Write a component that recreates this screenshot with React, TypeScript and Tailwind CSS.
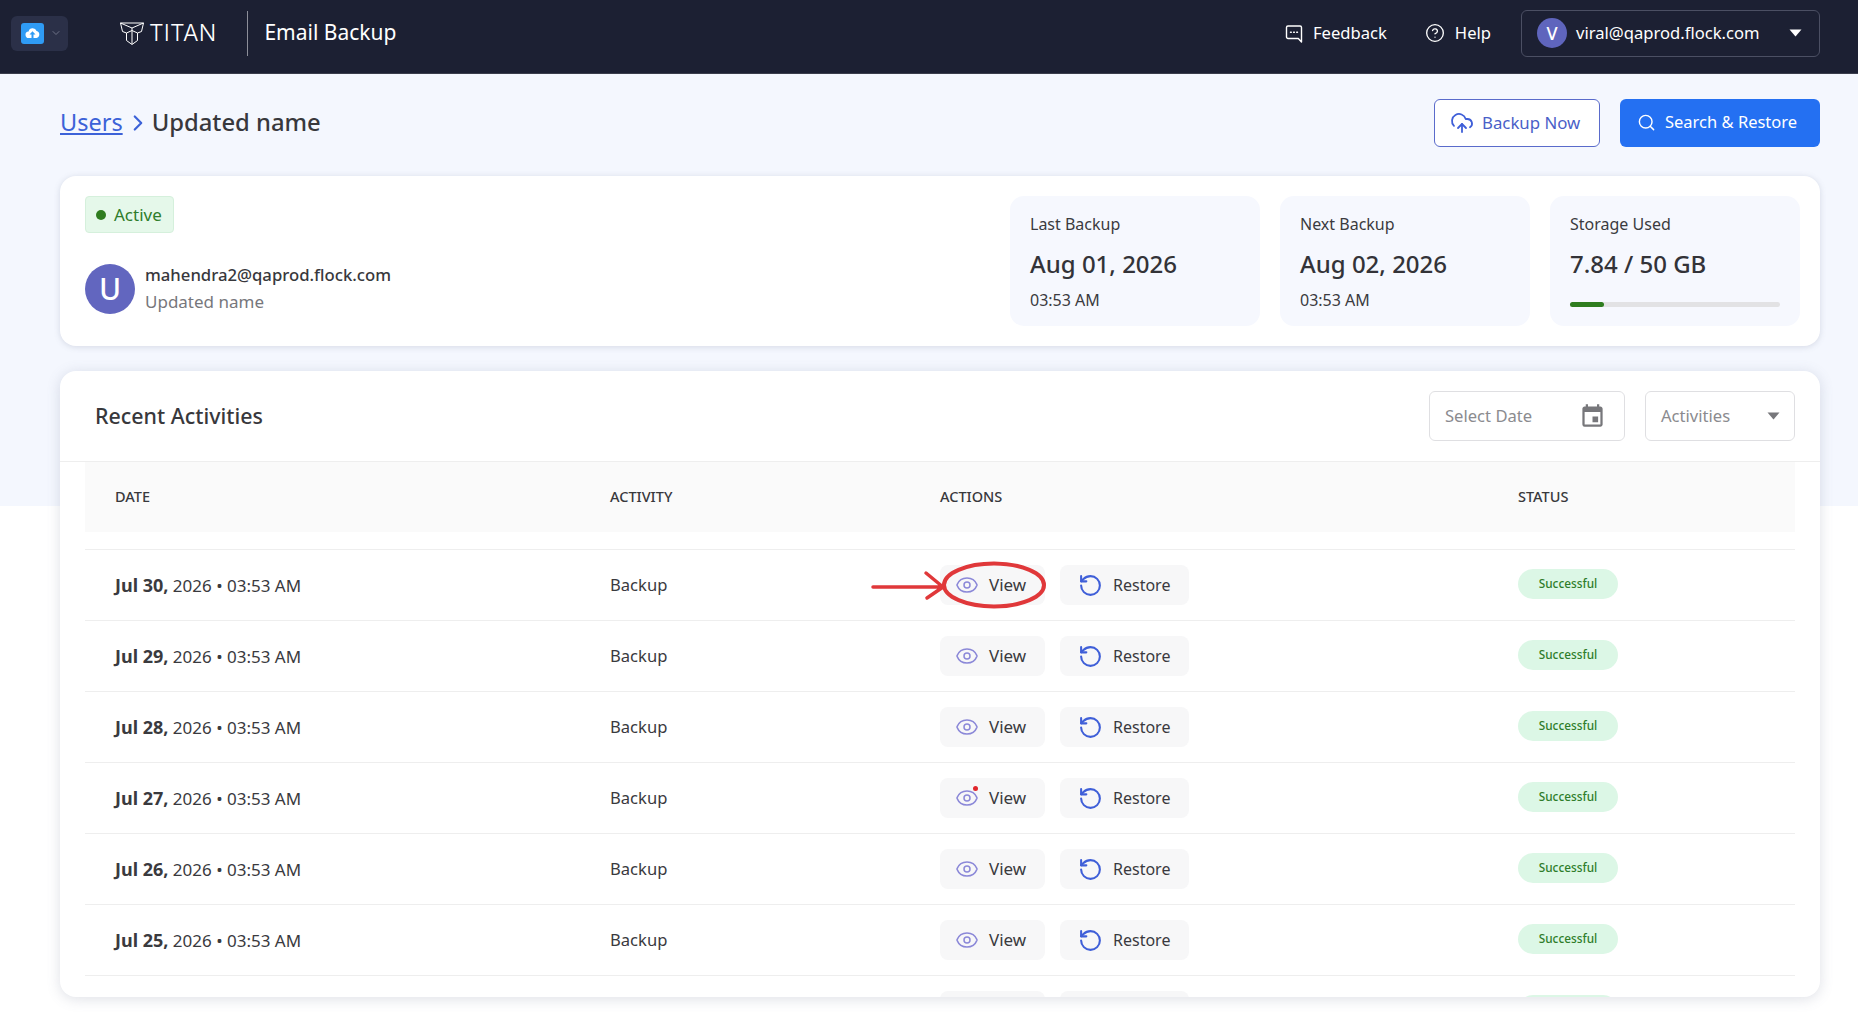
import { ChevronDown, ChevronRight, CircleHelp, CloudUpload, Eye, RotateCcw, Search } from "lucide-react";
import { MdEvent } from "react-icons/md";

const rows = ["Jul 30", "Jul 29", "Jul 28", "Jul 27", "Jul 26", "Jul 25"];

const Caret = ({ className }: { className: string }) => (
  <svg width="13" height="8" viewBox="0 0 13 8" className={className}>
    <path d="M0.5 0.5h12L6.5 7.5z" fill="currentColor" />
  </svg>
);

const TitanLogo = () => (
  <svg width="24" height="23" viewBox="0 0 24 23" fill="none" stroke="#fff" strokeWidth="1" strokeLinejoin="round">
    <path d="M0.5 1h23l-2 8.5-4 1.5v7.5l-5.5 4-5.5-4V11l-4-1.5z" />
    <path d="M0.5 1l11.5 5 11.5-5M12 6v16M6.5 11l5.5-2.5 5.5 2.5" />
  </svg>
);

const FeedbackIcon = () => (
  <svg width="18" height="19" viewBox="0 0 18 19" fill="none" stroke="#fff" strokeWidth="1.4" strokeLinejoin="round">
    <path d="M3 2h12a1.5 1.5 0 0 1 1.5 1.5V18l-3.2-3.5H3A1.5 1.5 0 0 1 1.5 13V3.5A1.5 1.5 0 0 1 3 2z" />
    <path d="M5.5 8.2h.8M8.6 8.2h.8M11.7 8.2h.8" strokeLinecap="round" />
  </svg>
);

const Stat = ({ label, value, sub }: { label: string; value: string; sub: string }) => (
  <div className="w-[250px] h-[130px] rounded-[14px] bg-[#f6f8fe] px-5 pt-[16px]">
    <p className="text-base leading-[24px] text-[#3b3b3f]">{label}</p>
    <p className="mt-[11px] text-[24px] leading-[34px] font-medium text-[#333338]">{value}</p>
    <p className="mt-[7px] text-base leading-[24px] text-[#3b3b3f]">{sub}</p>
  </div>
);

const Actions = ({ index }: { index: number }) => (
  <div className="w-[578px] flex gap-[15px]">
    <div className="w-[105px] h-[40px] rounded-lg bg-[#f7f7f8] flex items-center pl-[15px] gap-[10px] text-[17px] relative">
      <Eye size={24} strokeWidth={1.5} className="text-[#8b88d8]" />
      {index === 3 && <span className="absolute left-[33px] top-[8px] w-[5px] h-[5px] rounded-full bg-[#e0262c]" />}
      <span>View</span>
    </div>
    <div className="w-[129px] h-[40px] rounded-lg bg-[#f7f7f8] flex items-center pl-[18px] gap-[10px] text-[16px]">
      <RotateCcw size={25} strokeWidth={2} className="text-[#3f5fd8]" />
      <span>Restore</span>
    </div>
  </div>
);

const Row = ({ date, index }: { date: string; index: number }) => (
  <div className="flex items-center h-[71px] shrink-0 border-t border-[#eeeeee] text-[#3a3a3e]">
    <div className="w-[495px] pl-[30px] text-[17px] mr-[30px]">
      <span className="font-bold text-[18px]">{date},</span> 2026 • 03:53 AM
    </div>
    <div className="w-[330px] text-[16.6px]">Backup</div>
    <Actions index={index} />
    <div className="w-[100px] h-[30px] mb-[2px] rounded-[15px] bg-[#dcf7e6] flex items-center justify-center text-[11.8px] font-medium text-[#2f7d2b]">
      Successful
    </div>
  </div>
);

export default function App() {
  return (
    <div className="h-screen overflow-hidden flex flex-col bg-white font-['Noto_Sans','Open_Sans',sans-serif]">
      <header className="h-[74px] shrink-0 bg-[#1c2033] border-b border-[#3a3d4c] flex items-center pl-[11px] pr-[38px] pb-[7px]">
        <div className="w-[57px] h-[35px] rounded-md bg-[#2b3048] flex items-center pl-[10px] gap-[6px]">
          <div className="w-[23px] h-[21px] rounded-[3px] bg-[#2f9bf4] flex items-center justify-center">
            <svg width="15" height="12" viewBox="0 0 15 12">
              <path d="M4 11a3.3 3.3 0 0 1-.4-6.6A4.2 4.2 0 0 1 11.6 4 3.6 3.6 0 0 1 11.5 11H8.5V7.5h2L7.5 4.2 4.5 7.5h2V11z" fill="#fff" />
            </svg>
          </div>
          <ChevronDown size={12} className="text-[#6d7186]" />
        </div>
        <div className="ml-[52px] flex items-center gap-[5px]">
          <TitanLogo />
          <span className="font-['Inter'] font-light text-[23px] leading-none text-white tracking-[0.01em]">TITAN</span>
        </div>
        <div className="ml-[31px] w-px h-[45px] bg-[#8c8e99]" />
        <span className="ml-[16px] text-[21px] text-white">Email Backup</span>
        <div className="ml-auto flex items-center text-white text-[16.6px]">
          <FeedbackIcon />
          <span className="ml-[10px]">Feedback</span>
          <CircleHelp size={20} strokeWidth={1.6} className="ml-[38px]" />
          <span className="ml-[10px]">Help</span>
          <div className="ml-[30px] w-[299px] h-[47px] rounded-md border border-[#4b4f63] flex items-center pl-[15px] pr-[17px]">
            <div className="w-[30px] h-[30px] rounded-full bg-[#5f65bd] flex items-center justify-center text-[18px] font-medium">V</div>
            <span className="ml-[9px]">viral@qaprod.flock.com</span>
            <Caret className="ml-auto text-white" />
          </div>
        </div>
      </header>

      <main className="flex-1 min-h-0 flex flex-col pl-[60px] pr-[38px] bg-[linear-gradient(#f4f7fe_432px,#fff_432px)]">
        <div className="h-[102px] shrink-0 flex items-center pb-[5px]">
          <a className="text-[23.5px] text-[#3c62d8] underline underline-offset-2">Users</a>
          <ChevronRight size={26} strokeWidth={2} className="ml-[2px] text-[#3c62d8]" />
          <span className="ml-[1px] text-[23.8px] font-medium text-[#38383c]">Updated name</span>
          <button className="ml-auto w-[166px] h-[48px] rounded-md border border-[#5a6bcb] bg-white flex items-center pl-[15px] gap-[8px] text-[16.8px] text-[#4a5fc8]">
            <CloudUpload size={24} strokeWidth={1.8} className="text-[#3f5fd8]" />
            Backup Now
          </button>
          <button className="ml-[20px] w-[200px] h-[48px] rounded-md bg-[#2470f2] flex items-center pl-[17px] gap-[9px] text-[16.5px] text-white">
            <Search size={19} strokeWidth={1.8} />
            Search &amp; Restore
          </button>
        </div>

        <section className="h-[170px] shrink-0 rounded-2xl bg-white shadow-[0_1px_6px_rgba(90,100,130,0.2)] flex justify-between pl-[25px] pr-[20px] py-[20px]">
          <div>
            <div className="w-[89px] h-[37px] rounded bg-[#e5f8ea] border border-[#d5f0dc] flex items-center pl-[10px] gap-[8px] text-[17px] text-[#2f7d2b]">
              <span className="w-[10px] h-[10px] rounded-full bg-[#2f7d1f]" />
              Active
            </div>
            <div className="mt-[29px] flex items-center gap-[10px]">
              <div className="w-[50px] h-[50px] rounded-full bg-[#6266bf] flex items-center justify-center text-[30px] font-medium text-white">U</div>
              <div>
                <p className="text-[16.7px] leading-[26px] font-medium text-[#38383c]">mahendra2@qaprod.flock.com</p>
                <p className="text-[17px] leading-[27px] text-[#77777c]">Updated name</p>
              </div>
            </div>
          </div>
          <div className="flex gap-[20px]">
            <Stat label="Last Backup" value="Aug 01, 2026" sub="03:53 AM" />
            <Stat label="Next Backup" value="Aug 02, 2026" sub="03:53 AM" />
            <div className="w-[250px] h-[130px] rounded-[14px] bg-[#f6f8fe] px-5 pt-[16px]">
              <p className="text-base leading-[24px] text-[#3b3b3f]">Storage Used</p>
              <p className="mt-[11px] text-[24px] leading-[34px] font-medium text-[#333338]">7.84 / 50 GB</p>
              <div className="mt-[21px] h-[5px] rounded-full bg-[#e2e2e4]">
                <div className="h-full w-[16%] rounded-full bg-[#2f7d1f]" />
              </div>
            </div>
          </div>
        </section>

        <section className="mt-[25px] flex-1 min-h-0 mb-[24px] rounded-2xl bg-white shadow-[0_2px_14px_rgba(90,100,130,0.2)] flex flex-col overflow-hidden">
          <div className="h-[91px] shrink-0 border-b border-[#eeeeee] flex items-center pl-[35px] pr-[25px]">
            <h2 className="text-[21.4px] font-medium text-[#38383c]">Recent Activities</h2>
            <div className="ml-auto w-[196px] h-[50px] rounded-md border border-[#dfdfe2] flex items-center pl-[15px] pr-[18px] text-[16.6px] text-[#8b8b8f]">
              Select Date
              <MdEvent size={27} className="ml-auto text-[#77777b]" />
            </div>
            <div className="ml-[20px] w-[150px] h-[50px] rounded-md border border-[#dfdfe2] flex items-center pl-[15px] pr-[14px] text-[16.6px] text-[#8b8b8f]">
              Activities
              <Caret className="ml-auto text-[#77777b]" />
            </div>
          </div>
          <div className="flex-1 min-h-0 flex flex-col px-[25px]">
            <div className="h-[70px] shrink-0 bg-[#fafafa] flex items-center text-[14.5px] font-medium text-[#38383c]">
              <div className="w-[525px] pl-[30px]">DATE</div>
              <div className="w-[330px]">ACTIVITY</div>
              <div className="w-[578px]">ACTIONS</div>
              <div>STATUS</div>
            </div>
            <div className="h-[17px] shrink-0" />
            {rows.map((date, i) => (
              <Row key={date} date={date} index={i} />
            ))}
            <div className="h-[71px] shrink-0 border-t border-[#eeeeee] flex items-center">
              <div className="ml-[855px] w-[578px] flex gap-[15px]">
                <div className="w-[105px] h-[40px] rounded-lg bg-[#f7f7f8]" />
                <div className="w-[129px] h-[40px] rounded-lg bg-[#f7f7f8]" />
              </div>
              <div className="w-[100px] h-[30px] mb-[2px] rounded-[15px] bg-[#dcf7e6]" />
            </div>
          </div>
        </section>
      </main>

      {/* red annotation drawn over the first row */}
      <svg className="absolute left-[868px] top-[555px] pointer-events-none" width="184" height="60" viewBox="0 0 184 60" fill="none" stroke="#e0383a" strokeLinecap="round">
        <ellipse cx="126" cy="30" rx="50" ry="21.5" strokeWidth="4" />
        <path d="M5 32H75M58 18l17 14-16 11" strokeWidth="3.5" />
      </svg>
    </div>
  );
}
